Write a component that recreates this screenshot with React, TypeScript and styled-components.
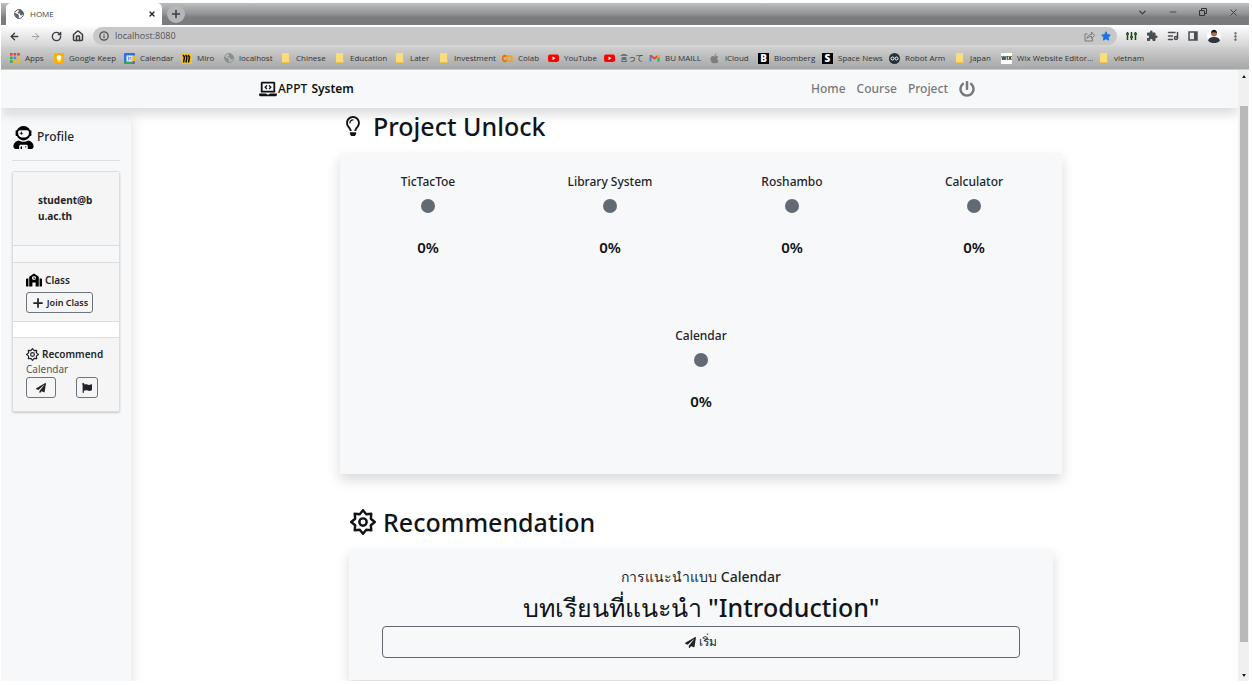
import React from "react";
import styled, { createGlobalStyle } from "styled-components";
import {
  FaApple,
  FaFlag,
  FaLaptopCode,
  FaPaperPlane,
  FaPowerOff,
  FaRegLightbulb,
  FaSchool,
  FaStar,
  FaUserAstronaut,
} from "react-icons/fa";
import { MdExtension } from "react-icons/md";
import { ArrowLeft, ArrowRight, ChevronDown, EllipsisVertical, House, Info, ListMusic, Minus, Plus, RotateCw, X } from "lucide-react";

const uiFont = `"Noto Sans", "Open Sans", "Noto Sans CJK JP", sans-serif`;
const chromeFont = `"Open Sans", "Noto Sans CJK JP", sans-serif`;

const GlobalStyle = createGlobalStyle`
  * { box-sizing: border-box; }
  body { margin: 0; background: #fff; color: #212529; font-family: ${uiFont}; }
  h1, h2, h3, p, ul { margin: 0; padding: 0; }
  ul { list-style: none; }
  a { color: inherit; text-decoration: none; }
  button { font-family: inherit; color: inherit; cursor: pointer; }
  svg { display: block; flex: none; }
`;

/* ---------- browser window ---------- */

const Window = styled.div`
  display: flex;
  flex-direction: column;
  height: 100vh;
  padding: 3px 3px 4px 1px;
  overflow: hidden;
`;

const TabStrip = styled.div`
  display: flex;
  align-items: stretch;
  height: 22px;
  flex: none;
  padding-left: 5px;
  background: linear-gradient(#bbbdbf 0%, #96999b 45%, #7b7d7f 65%, #7a7c7e 100%);
`;

const Tab = styled.div`
  display: flex;
  align-items: center;
  gap: 6px;
  width: 156px;
  padding: 0 6px 0 8px;
  background: #fff;
  border-radius: 5px 5px 0 0;
  font: 8px/12px ${chromeFont};
  color: #3c4043;
`;

const TabTitle = styled.span`
  flex: 1;
`;

const PlainButton = styled.button`
  display: flex;
  align-items: center;
  justify-content: center;
  padding: 0;
  border: 0;
  background: none;
  color: #3a3d41;
`;

const NewTab = styled(PlainButton)`
  width: 18px;
  height: 18px;
  margin: 2px 0 0 5px;
  border-radius: 50%;
  background: #b4b6b8;
`;

const WindowControls = styled.div`
  display: flex;
  align-items: center;
  gap: 20px;
  margin-left: auto;
  padding: 0 10px 4px 0;
`;

const AddressRow = styled.div`
  display: flex;
  align-items: center;
  height: 22px;
  flex: none;
  padding: 0 8px 0 8px;
  background: linear-gradient(#fff, #d3d3d3);
`;

const NavButtons = styled.div`
  display: flex;
  gap: 10px;
  margin-right: 9px;
`;

const Omnibox = styled.label`
  display: flex;
  align-items: center;
  flex: 1;
  gap: 6px;
  height: 18px;
  padding: 0 6px;
  border-radius: 9px;
  background: #c8c8c9;
  color: #4a4d51;
`;

const AddressInput = styled.input`
  flex: 1;
  min-width: 0;
  padding: 0;
  border: 0;
  outline: 0;
  background: none;
  color: #505357;
  font: 9px/14px ${chromeFont};
`;

const Extensions = styled.div`
  display: flex;
  align-items: center;
  gap: 9px;
  margin-left: 9px;
`;

const BookmarkBar = styled.ul`
  display: flex;
  align-items: center;
  height: 23px;
  flex: none;
  padding-left: 9px;
  background: linear-gradient(#cfcfcf, #a6a7a7);
  border-bottom: 1px solid #c9cbcc;
  overflow: hidden;
`;

const BookmarkItem = styled.li<{ $width: number }>`
  width: ${(p) => p.$width}px;
  flex: none;
`;

const BookmarkLink = styled.a`
  display: flex;
  align-items: center;
  gap: 5px;
  font: 8px/12px ${chromeFont};
  color: #333;
  white-space: nowrap;
`;

/* ---------- page ---------- */

const Viewport = styled.div`
  display: flex;
  flex: 1;
  min-height: 0;
`;

const Page = styled.div`
  flex: 1;
  min-width: 0;
  display: flex;
  flex-direction: column;
  overflow: hidden;
`;

const NavBar = styled.header`
  position: relative;
  z-index: 1;
  height: 38px;
  flex: none;
  padding: 0 263px 0 258px;
  background: #f7f8fa;
  box-shadow: 0 6px 12px rgba(0, 0, 0, 0.15);
  display: flex;
  align-items: center;
  justify-content: space-between;
`;

const Brand = styled.a`
  display: flex;
  align-items: center;
  gap: 1px;
  font-size: 12px;
  line-height: 18px;
  font-weight: 500;
  color: #111;
  white-space: pre;

  strong { font-weight: 600; }
`;

const NavLinks = styled.nav`
  display: flex;
  align-items: center;
  gap: 11px;
  font-size: 12px;
  line-height: 18px;
  font-weight: 500;
  color: #77787a;
`;

const Body = styled.div`
  display: flex;
  flex: 1;
  min-height: 0;
  padding-top: 5px;
`;

const Sidebar = styled.aside`
  width: 130px;
  flex: none;
  padding: 10px 11px;
  background: #f7f8fa;
  box-shadow: 0 6px 12px rgba(0, 0, 0, 0.15);
`;

const Profile = styled.a`
  display: flex;
  align-items: center;
  gap: 2px;
  height: 38px;
  padding-bottom: 9px;
  border-bottom: 1px solid #dcdee0;
  font-size: 12px;
  line-height: 18px;
  font-weight: 500;
`;

const SideCard = styled.div`
  margin-top: 10px;
  border: 1px solid #dcdddf;
  border-radius: 3px;
  background: #fff;
  box-shadow: 0 1px 2px rgba(0, 0, 0, 0.2);
`;

const Account = styled.p`
  padding: 20px 25px 21px;
  background: #f5f5f5;
  border-bottom: 1px solid #dcdddf;
  font-size: 10px;
  line-height: 16px;
  font-weight: 700;
  word-break: break-all;
`;

const Spacer = styled.div<{ $plain?: boolean }>`
  height: ${(p) => (p.$plain ? 15 : 16)}px;
  background: ${(p) => (p.$plain ? "#fff" : "#f7f8fa")};
`;

const SideSection = styled.section`
  padding: 9px 13px 8px;
  background: #f5f5f5;
  border: 0 solid #dcdddf;
  border-width: 1px 0;

  &:last-child {
    padding-bottom: 13px;
    border-bottom: 0;
  }
`;

const SideTitle = styled.h3`
  display: flex;
  align-items: center;
  gap: 3px;
  font-size: 10px;
  line-height: 15px;
  font-weight: 600;
`;

const SideText = styled.p`
  font-size: 10px;
  line-height: 15px;
  color: #55595d;
`;

const OutlineButton = styled.button<{ $width: number }>`
  display: flex;
  align-items: center;
  justify-content: center;
  gap: 2px;
  width: ${(p) => p.$width}px;
  height: 21px;
  padding: 0;
  border: 1px solid #6c757d;
  border-radius: 3px;
  background: transparent;
  font-size: 9px;
  line-height: 13px;
  font-weight: 600;
  white-space: nowrap;
`;

const JoinRow = styled.div`
  margin-top: 4px;
`;

const ButtonRow = styled.div`
  display: flex;
  gap: 20px;
`;

const Main = styled.main`
  flex: 1;
  min-width: 0;
  padding: 0 176px 0 209px;
`;

const Heading = styled.h1`
  display: flex;
  align-items: center;
  height: 26px;
  font-size: 25px;
  line-height: 26px;
  font-weight: 500;
  color: #111418;
`;

const ProjectHeading = styled(Heading)`
  gap: 10px;
  padding-left: 3px;
`;

const RecommendHeading = styled(Heading)`
  gap: 7px;
  margin: 35px 0 14px 10px;
`;

const Card = styled.section`
  background: #f7f8fa;
  box-shadow: 0 6px 12px rgba(0, 0, 0, 0.15);
`;

const ProjectCard = styled(Card)`
  margin-top: 14px;
  padding-top: 19px;
`;

const ProjectGrid = styled.div`
  display: flex;
  flex-wrap: wrap;
  justify-content: center;
  margin: 0 -3px;
`;

const Project = styled.div`
  width: 25%;
  display: flex;
  flex-direction: column;
  align-items: center;
  height: 154px;

  &:last-child { height: 148px; }
`;

const ProjectName = styled.h3`
  font-size: 12px;
  line-height: 20px;
  font-weight: 500;
`;

const Dot = styled.span`
  width: 14px;
  height: 14px;
  margin: 7px 0 24px;
  border-radius: 50%;
  background: #626a73;
`;

const Percent = styled.p`
  font-size: 15px;
  line-height: 20px;
  font-weight: 600;
  color: #111;
`;

const RecommendCard = styled(Card)`
  display: flex;
  flex-direction: column;
  align-items: center;
  margin: 0 9px;
  padding: 16px 33px 22px;
`;

const RecommendKind = styled.p`
  font-size: 14px;
  line-height: 24px;
  font-weight: 500;
`;

const Lesson = styled.h2`
  font-size: 25px;
  line-height: 36px;
  font-weight: 500;
  color: #111418;
`;

const StartButton = styled.button`
  display: flex;
  align-items: center;
  justify-content: center;
  gap: 3px;
  width: 100%;
  height: 32px;
  margin-top: 1px;
  border: 1px solid #5f666d;
  border-radius: 4px;
  background: transparent;
  font-size: 12px;
  line-height: 18px;
`;

const ScrollBar = styled.div`
  display: flex;
  flex-direction: column;
  align-items: center;
  justify-content: space-between;
  width: 11px;
  flex: none;
  padding: 5px 0 4px;
  background: #f0f0f0;
`;

const Thumb = styled.div`
  width: 8px;
  height: 89%;
  margin-bottom: 4px;
  background: #b9b9b9;
`;

const Arrow = styled.span<{ $down?: boolean }>`
  border: 2px solid transparent;
  border-top: ${(p) => (p.$down ? "3px solid #222" : "0")};
  border-bottom: ${(p) => (p.$down ? "0" : "3px solid #222")};
`;

/* ---------- drawings ---------- */

const StarGear = ({ size }: { size: number }) => (
  <svg width={size} height={size} viewBox="0 0 32 32" fill="none" stroke="currentColor" strokeWidth="3" strokeLinejoin="round">
    <path d="M30.500 16 25.600 20 26.200 26.200 20 25.600 16 30.500 12 25.600 5.800 26.200 6.400 20 1.500 16 6.400 12 5.800 5.800 12 6.400 16 1.500 20 6.400 26.200 5.800 25.600 12Z" />
    <circle cx="16" cy="16" r="4.500" />
  </svg>
);

const Globe = ({ color = "#5f6368" }: { color?: string }) => (
  <svg width="10" height="10" viewBox="0 0 20 20">
    <circle cx="10" cy="10" r="9" fill="none" stroke={color} strokeWidth="2" />
    <path fill={color} d="M2 8l5 2 3 3-1 6C4 18 1 14 2 8ZM9 1c6-1 10 4 10 9l-4 3-3-1v-3H8L7 6l3-1Z" />
  </svg>
);

const Folder = () => (
  <svg width="10" height="10" viewBox="0 0 10 10">
    <path d="M1 0h7v7h1v3H1Z" fill="#f9dc7c" />
    <path d="M1 9h6l2-2v3H1Z" fill="#eec04e" />
  </svg>
);

const AppsGrid = () => (
  <svg width="10" height="10" viewBox="0 0 10 10">
    {["#ea4335", "#ea4335", "#ea4335", "#34a853", "#4285f4", "#fbbc04", "#34a853", "#fbbc04", "#fbbc04"].map((c, i) => (
      <rect key={i} x={(i % 3) * 3.6} y={Math.floor(i / 3) * 3.6} width="2.600" height="2.600" fill={c} />
    ))}
  </svg>
);

const Keep = () => (
  <svg width="10" height="10" viewBox="0 0 20 20">
    <rect width="20" height="20" rx="2" fill="#fbb000" />
    <path d="M10 4a5 5 0 0 1 3 9v1H7v-1a5 5 0 0 1 3-9ZM7 15h6v2H7Z" fill="#fff" />
  </svg>
);

const CalendarLogo = () => (
  <svg width="11" height="11" viewBox="0 0 22 22">
    <rect width="22" height="22" rx="2" fill="#2f6fe4" />
    <path d="M17 5h5v12h-5Z" fill="#fbbc04" />
    <path d="M0 17h17v5H2a2 2 0 0 1-2-2Z" fill="#34a853" />
    <path d="M17 17h5l-5 5Z" fill="#ea4335" />
    <path d="M5 5h12v12H5Z" fill="#fff" />
    <path d="M7 8h3v6H7M8 11h2M12 9l2-1v7" fill="none" stroke="#2f6fe4" strokeWidth="1.500" />
  </svg>
);

const Miro = () => (
  <svg width="11" height="11" viewBox="0 0 22 22">
    <rect width="22" height="22" rx="3" fill="#fcc21a" />
    <path d="M4 4l3 4-2 11M9 4l3 4-2 11M14 4l3 4-2 11" fill="none" stroke="#111" strokeWidth="3" />
  </svg>
);

const Colab = () => (
  <svg width="11" height="11" viewBox="0 0 22 22" fill="none" strokeWidth="4">
    <path d="M9 7a5 5 0 1 0 0 8" stroke="#e8710a" />
    <circle cx="15" cy="11" r="5" stroke="#f9a01b" />
  </svg>
);

const YouTube = () => (
  <svg width="11" height="10" viewBox="0 0 22 20">
    <rect y="3" width="22" height="15" rx="4" fill="#f00" />
    <path d="M9 7l6 3.500-6 3.500Z" fill="#fff" />
  </svg>
);

const Gmail = () => (
  <svg width="11" height="10" viewBox="0 0 22 20">
    <path d="M1 4h4v13H1Z" fill="#4285f4" />
    <path d="M17 4h4v13h-4Z" fill="#34a853" />
    <path d="M3 5l8 6 8-6" fill="none" stroke="#ea4335" strokeWidth="4" />
    <path d="M17 4h4v4l-4 3Z" fill="#fbbc04" />
  </svg>
);

const LetterTile = styled.span<{ $bg: string; $fg: string; $size: number }>`
  display: grid;
  place-items: center;
  width: 11px;
  height: 11px;
  background: ${(p) => p.$bg};
  color: ${(p) => p.$fg};
  font-size: ${(p) => p.$size}px;
  line-height: 11px;
  font-weight: 800;
`;

const RobotLogo = () => (
  <svg width="11" height="11" viewBox="0 0 22 22">
    <circle cx="11" cy="11" r="11" fill="#263238" />
    <g fill="none" stroke="#fff" strokeWidth="2">
      <circle cx="7" cy="11" r="3" />
      <circle cx="15" cy="11" r="3" />
    </g>
  </svg>
);

const ShareArrow = () => (
  <svg width="11" height="11" viewBox="0 0 22 22" fill="none" stroke="#77797b" strokeWidth="2">
    <path d="M7 6H2v14h15v-5M6 15c1-6 5-8 9-8V2l6 7-6 6v-4c-4 0-7 1-9 4Z" />
  </svg>
);

const RestoreIcon = () => (
  <svg width="10" height="10" viewBox="0 0 10 10" fill="none" stroke="#333">
    <path d="M1.500 3.500h5v5h-5ZM3.500 3.500v-2h5v5h-2" />
  </svg>
);

const Sliders = () => (
  <svg width="11" height="12" viewBox="0 0 11 12">
    <path d="M1.500 2v8M5.500 2v8M9.500 2v8" stroke="#2b3a20" strokeWidth="1.500" />
    <path d="M0 4h3M4 7h3M8 4h3" stroke="#2f6a1c" strokeWidth="2" />
  </svg>
);

const SidePanel = () => (
  <svg width="10" height="10" viewBox="0 0 10 10">
    <path d="M1 1h8v8H1Z" fill="none" stroke="#4a4d51" strokeWidth="1.500" />
    <path d="M6 1h3v8H6Z" fill="#4a4d51" />
  </svg>
);

const Avatar = () => (
  <svg width="14" height="14" viewBox="0 0 28 28">
    <circle cx="14" cy="14" r="14" fill="#fff" />
    <path d="M2 23c2-6 7-7 12-7s10 1 12 7c-3 4-7 5-12 5S5 27 2 23Z" fill="#2e3440" />
    <circle cx="14" cy="9" r="6" fill="#a86f56" />
    <path d="M8 8c0-9 12-9 12 0-3-2-9-2-12 0Z" fill="#161616" />
  </svg>
);

/* ---------- data ---------- */

const bookmarks: { label: string; icon: React.ReactNode; width: number }[] = [
  { label: "Apps", icon: <AppsGrid />, width: 44 },
  { label: "Google Keep", icon: <Keep />, width: 70 },
  { label: "Calendar", icon: <CalendarLogo />, width: 57 },
  { label: "Miro", icon: <Miro />, width: 43 },
  { label: "localhost", icon: <Globe color="#8b8e91" />, width: 57 },
  { label: "Chinese", icon: <Folder />, width: 54 },
  { label: "Education", icon: <Folder />, width: 60 },
  { label: "Later", icon: <Folder />, width: 44 },
  { label: "Investment", icon: <Folder />, width: 63 },
  { label: "Colab", icon: <Colab />, width: 46 },
  { label: "YouTube", icon: <YouTube />, width: 56 },
  { label: "言って", icon: <YouTube />, width: 45 },
  { label: "BU MAILL", icon: <Gmail />, width: 60 },
  { label: "iCloud", icon: <FaApple size={11} color="#7b7d7f" />, width: 49 },
  { label: "Bloomberg", icon: <LetterTile $bg="#000" $fg="#fff" $size={10}>B</LetterTile>, width: 64 },
  { label: "Space News", icon: <LetterTile $bg="#000" $fg="#fff" $size={10}>S</LetterTile>, width: 67 },
  { label: "Robot Arm", icon: <RobotLogo />, width: 66 },
  { label: "Japan", icon: <Folder />, width: 46 },
  { label: "Wix Website Editor...", icon: <LetterTile $bg="#fff" $fg="#222" $size={5}>WIX</LetterTile>, width: 98 },
  { label: "vietnam", icon: <Folder />, width: 50 },
];

const projects = ["TicTacToe", "Library System", "Roshambo", "Calculator", "Calendar"];

export default function App() {
  return (
    <Window>
      <GlobalStyle />
      <TabStrip>
        <Tab>
          <Globe />
          <TabTitle>HOME</TabTitle>
          <PlainButton aria-label="Close tab"><X size={8} strokeWidth={4} color="#222" /></PlainButton>
        </Tab>
        <NewTab aria-label="New tab"><Plus size={12} strokeWidth={3} /></NewTab>
        <WindowControls>
          <PlainButton aria-label="Search tabs"><ChevronDown size={11} strokeWidth={3} /></PlainButton>
          <PlainButton aria-label="Minimize"><Minus size={10} /></PlainButton>
          <PlainButton aria-label="Restore"><RestoreIcon /></PlainButton>
          <PlainButton aria-label="Close"><X size={11} /></PlainButton>
        </WindowControls>
      </TabStrip>
      <AddressRow>
        <NavButtons>
          <PlainButton aria-label="Back"><ArrowLeft size={11} strokeWidth={3} /></PlainButton>
          <PlainButton aria-label="Forward"><ArrowRight size={11} color="#97999b" /></PlainButton>
          <PlainButton aria-label="Reload"><RotateCw size={11} strokeWidth={3} /></PlainButton>
          <PlainButton aria-label="Home page"><House size={12} strokeWidth={3} /></PlainButton>
        </NavButtons>
        <Omnibox>
          <Info size={10} strokeWidth={3} />
          <AddressInput aria-label="Address" defaultValue="localhost:8080" />
          <ShareArrow />
          <FaStar size={10} color="#1a73e8" />
        </Omnibox>
        <Extensions>
          <Sliders />
          <MdExtension size={12} color="#4a4d51" />
          <ListMusic size={12} strokeWidth={3} color="#4a4d51" />
          <SidePanel />
          <Avatar />
          <EllipsisVertical size={11} color="#4a4d51" strokeWidth={3} />
        </Extensions>
      </AddressRow>
      <BookmarkBar>
        {bookmarks.map((b) => (
          <BookmarkItem key={b.label} $width={b.width}>
            <BookmarkLink href="#">{b.icon}{b.label}</BookmarkLink>
          </BookmarkItem>
        ))}
      </BookmarkBar>

      <Viewport>
        <Page>
          <NavBar>
            <Brand href="#"><FaLaptopCode size={18} />APPT <strong>System</strong></Brand>
            <NavLinks>
              <a href="#">Home</a>
              <a href="#">Course</a>
              <a href="#">Project</a>
              <a href="#" aria-label="Log out"><FaPowerOff size={16} /></a>
            </NavLinks>
          </NavBar>
          <Body>
            <Sidebar>
              <Profile href="#"><FaUserAstronaut size={23} color="#000" />Profile</Profile>
              <SideCard>
                <Account>student@bu.ac.th</Account>
                <Spacer />
                <SideSection>
                  <SideTitle><FaSchool size={16} color="#000" />Class</SideTitle>
                  <JoinRow>
                    <OutlineButton $width={67}><Plus size={14} strokeWidth={3} />Join Class</OutlineButton>
                  </JoinRow>
                </SideSection>
                <Spacer $plain />
                <SideSection>
                  <SideTitle><StarGear size={13} />Recommend</SideTitle>
                  <SideText>Calendar</SideText>
                  <ButtonRow>
                    <OutlineButton $width={30} aria-label="Start Calendar"><FaPaperPlane size={10} /></OutlineButton>
                    <OutlineButton $width={22} aria-label="Flag Calendar"><FaFlag size={10} /></OutlineButton>
                  </ButtonRow>
                </SideSection>
              </SideCard>
            </Sidebar>
            <Main>
              <ProjectHeading><FaRegLightbulb size={20} />Project Unlock</ProjectHeading>
              <ProjectCard>
                <ProjectGrid>
                  {projects.map((name) => (
                    <Project key={name}>
                      <ProjectName>{name}</ProjectName>
                      <Dot />
                      <Percent>0%</Percent>
                    </Project>
                  ))}
                </ProjectGrid>
              </ProjectCard>
              <RecommendHeading><StarGear size={26} />Recommendation</RecommendHeading>
              <RecommendCard>
                <RecommendKind>การแนะนำแบบ Calendar</RecommendKind>
                <Lesson>บทเรียนที่แนะนำ "Introduction"</Lesson>
                <StartButton><FaPaperPlane size={11} />เริ่ม</StartButton>
              </RecommendCard>
            </Main>
          </Body>
        </Page>
        <ScrollBar aria-hidden="true">
          <Arrow />
          <Thumb />
          <Arrow $down />
        </ScrollBar>
      </Viewport>
    </Window>
  );
}
